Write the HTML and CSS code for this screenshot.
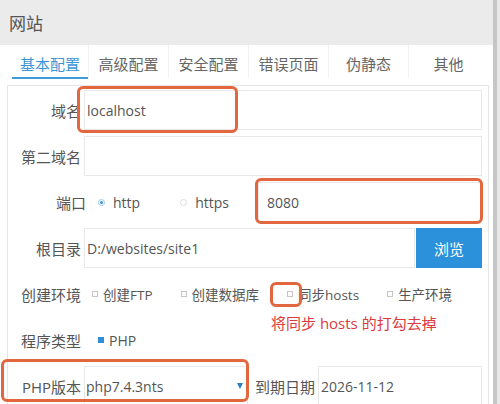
FILE: index.html
```html
<!DOCTYPE html>
<html lang="zh">
<head>
<meta charset="utf-8">
<link rel="stylesheet" href="styles.css">
</head>
<body>
<div class="screen">
  <div class="main">
    <div class="title">网站</div>
    <div class="tabs">
      <div class="tab active">基本配置</div>
      <div class="tab">高级配置</div>
      <div class="tab">安全配置</div>
      <div class="tab">错误页面</div>
      <div class="tab">伪静态</div>
      <div class="tab">其他</div>
    </div>
    <div class="panel">
      <div class="row">
        <div class="lbl">域名</div>
        <div class="field grow">localhost</div>
      </div>
      <div class="row">
        <div class="lbl">第二域名</div>
        <div class="field grow"></div>
      </div>
      <div class="row">
        <div class="lbl lbl-port">端口</div>
        <div class="radios">
          <span class="opt"><span class="radio on"></span>http</span>
          <span class="opt"><span class="radio"></span>https</span>
        </div>
        <div class="field port">8080</div>
      </div>
      <div class="row">
        <div class="lbl">根目录</div>
        <div class="field grow">D:/websites/site1</div>
        <div class="btn">浏览</div>
      </div>
      <div class="row">
        <div class="lbl">创建环境</div>
        <div class="checks">
          <span class="opt"><span class="cb"></span>创建FTP</span>
          <span class="opt"><span class="cb"></span>创建数据库</span>
          <span class="opt"><span class="cb"></span>同步hosts</span>
          <span class="opt"><span class="cb"></span>生产环境</span>
        </div>
      </div>
      <div class="row">
        <div class="lbl">程序类型</div>
        <div class="checks php">
          <span class="opt"><span class="cb on"></span>PHP</span>
        </div>
      </div>
      <div class="row">
        <div class="lbl">PHP版本</div>
        <div class="field select">php7.4.3nts<span class="caret"></span></div>
        <div class="lbl2">到期日期</div>
        <div class="field grow date">2026-11-12</div>
      </div>
    </div>
    <div class="mark m1"></div>
    <div class="mark m2"></div>
    <div class="mark m3"></div>
    <div class="mark m4"></div>
    <div class="note">将同步 hosts 的打勾去掉</div>
  </div>
  <div class="edge"></div>
</div>
</body>
</html>
```
FILE: styles.css
```css
html, body {
  margin: 0;
  padding: 0;
  background: #fff;
}
body {
  font-family: "Open Sans", "Noto Sans CJK SC", sans-serif;
  color: #555;
}
.screen {
  display: flex;
  width: 500px;
  height: 404px;
  overflow: hidden;
}
.main {
  position: relative;
  width: 493px;
  flex: none;
}
.edge {
  width: 7px;
  flex: none;
  background: linear-gradient(to right, #c6c6c6 0, #c6c6c6 4px, #e8e8e8 4px);
}
.title {
  height: 45px;
  box-sizing: border-box;
  padding: 2px 0 0 9px;
  line-height: 43px;
  font-size: 17px;
  color: #555;
  background: #ebebeb;
}
.tabs {
  display: flex;
  height: 40px;
  padding-left: 12px;
  box-sizing: border-box;
}
.tab {
  width: 80px;
  height: 34px;
  box-sizing: border-box;
  padding-top: 5px;
  display: flex;
  align-items: center;
  justify-content: center;
  font-size: 15px;
  color: #666;
  border-left: 1px solid #f2f2f2;
  border-bottom: 2px solid transparent;
}
.tab.active {
  width: 76px;
  color: #3a96d6;
  border-left: none;
  border-bottom-color: #3f9ad8;
}
.panel {
  margin-left: 7px;
  width: 482px;
  box-sizing: border-box;
  border: 1px solid #e6e6e6;
  border-bottom: none;
  padding: 4px 6px 0 0;
  height: 330px;
}
.row {
  display: flex;
  align-items: center;
  height: 40px;
  margin-bottom: 6px;
}
.lbl {
  width: 73px;
  flex: none;
  text-align: right;
  font-size: 15px;
  color: #555;
  margin-right: 3px;
  white-space: nowrap;
}
.lbl-port {
  width: 78px;
  margin-right: 0;
}
.field {
  height: 40px;
  box-sizing: border-box;
  border: 1px solid #e8e8e8;
  display: flex;
  align-items: center;
  padding-left: 2px;
  font-size: 14px;
  color: #555;
  white-space: nowrap;
}
.grow {
  flex: 1;
}
.radios {
  display: flex;
  align-items: center;
  margin-left: 12px;
  font-size: 14px;
  flex: none;
}
.opt {
  display: inline-flex;
  align-items: center;
  color: #555;
  flex: none;
  white-space: nowrap;
}
.radios .opt:first-child {
  margin-right: 40px;
}
.radio {
  width: 7px;
  height: 7px;
  box-sizing: border-box;
  border: 1px solid #dcdcdc;
  border-radius: 50%;
  margin-right: 8px;
  position: relative;
}
.radio.on {
  border-color: #9ccbeb;
}
.radio.on::after {
  content: "";
  position: absolute;
  left: 1px;
  top: 1px;
  width: 3px;
  height: 3px;
  border-radius: 50%;
  background: #3b95d6;
}
.field.port {
  margin-left: auto;
  width: 224px;
  flex: none;
  padding-left: 8px;
}
.btn {
  width: 66px;
  height: 40px;
  flex: none;
  margin-left: 1px;
  background: #2a91da;
  color: #fff;
  font-size: 15px;
  display: flex;
  align-items: center;
  justify-content: center;
}
.checks {
  display: flex;
  align-items: center;
  margin-left: 8px;
  font-size: 13.5px;
  flex: none;
}
.checks .opt {
  margin-right: 28px;
}
.cb {
  width: 6px;
  height: 6px;
  flex: none;
  box-sizing: border-box;
  border: 1px solid #c6c6c6;
  margin-right: 5px;
  background: #fff;
}
.cb.on {
  background: #2f8fd6;
  border-color: #2f8fd6;
}
.checks.php {
  margin-left: 14px;
  font-size: 14px;
}
.field.select {
  width: 164px;
  flex: none;
  padding: 0 4px 0 1px;
  justify-content: space-between;
}
.caret {
  width: 0;
  height: 0;
  border-left: 3px solid transparent;
  border-right: 3px solid transparent;
  border-top: 6px solid #2b7fc3;
}
.lbl2 {
  margin-left: 7px;
  margin-right: 3px;
  font-size: 15px;
  color: #555;
  white-space: nowrap;
}
.field.date {
  padding-left: 2px;
}
.mark {
  position: absolute;
  box-sizing: border-box;
  border: 3px solid #e2673f;
  border-radius: 6px;
}
.m1 { left: 77px; top: 86px; width: 161px; height: 47px; }
.m2 { left: 255px; top: 178px; width: 228px; height: 46px; }
.m3 { left: 270px; top: 282px; width: 32px; height: 25px; }
.m4 { left: 1px; top: 359px; width: 248px; height: 43px; }
.note {
  position: absolute;
  left: 271px;
  top: 313px;
  font-size: 15px;
  line-height: 20px;
  color: #dc3a3c;
  white-space: nowrap;
}
```
